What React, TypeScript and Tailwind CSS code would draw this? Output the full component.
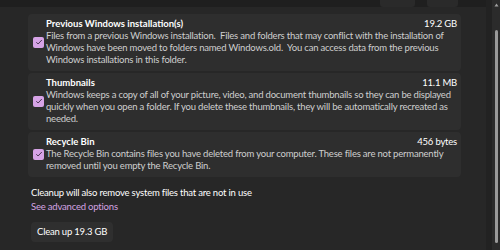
import React from "react";

const Check = () => (
  <div className="w-[11px] h-[11px] rounded-[2px] bg-[#d6a3e6] flex items-center justify-center shrink-0">
    <svg width="8" height="8" viewBox="0 0 8 8">
      <path d="M1.3 4.2 L3.1 6 L6.8 2" fill="none" stroke="#3b2a44" strokeWidth="0.9" />
    </svg>
  </div>
);

type CardProps = { title: string; size: string; lines: string[] };

const Card = ({ title, size, lines }: CardProps) => (
  <div className="flex items-center bg-[#2e2e2e] rounded-[4px] pl-[5px] pr-[4px] pt-[4px] pb-[5px]">
    <Check />
    <div className="flex-1 ml-[2px]">
      <div className="flex justify-between items-center h-[12px]">
        <span className="font-bold text-white">{title}</span>
        <span className="text-white tracking-[-0.2px]">{size}</span>
      </div>
      {lines.map((l, i) => (
        <div key={i} className="leading-[12px] text-[#cfcfcf] whitespace-pre tracking-[-0.2px]">
          {l}
        </div>
      ))}
    </div>
  </div>
);

export default function App() {
  return (
    <div
      className="w-[500px] h-[250px] bg-[#272727] flex overflow-hidden text-[9.5px]"
      style={{ fontFamily: 'Lato, "Noto Sans", sans-serif' }}
    >
      <div className="flex-1 flex flex-col">
        <div className="h-[7px] bg-[#1f1f1f] flex justify-end gap-[12px] pr-[28px]">
          <div className="w-[35px] h-[7px] bg-[#2a2a2a] rounded-b-[3px]" />
          <div className="w-[31px] h-[7px] bg-[#2a2a2a] rounded-b-[3px]" />
        </div>
        <div className="pl-[28px] pr-[25px] pt-[7px] flex flex-col gap-[2px]">
          <Card
            title="Previous Windows installation(s)"
            size="19.2 GB"
            lines={[
              "Files from a previous Windows installation.  Files and folders that may conflict with the installation of",
              "Windows have been moved to folders named Windows.old.  You can access data from the previous",
              "Windows installations in this folder.",
            ]}
          />
          <Card
            title="Thumbnails"
            size="11.1 MB"
            lines={[
              "Windows keeps a copy of all of your picture, video, and document thumbnails so they can be displayed",
              "quickly when you open a folder. If you delete these thumbnails, they will be automatically recreated as",
              "needed.",
            ]}
          />
          <Card
            title="Recycle Bin"
            size="456 bytes"
            lines={[
              "The Recycle Bin contains files you have deleted from your computer. These files are not permanently",
              "removed until you empty the Recycle Bin.",
            ]}
          />
        </div>
        <div className="pl-[31px] mt-[10px] tracking-[-0.2px]">
          <div className="leading-[12px] text-white">Cleanup will also remove system files that are not in use</div>
          <div className="leading-[13px] text-[#d4a3e2] mt-[1px]">See advanced options</div>
          <button className="mt-[9px] h-[20px] px-[6px] rounded-[4px] bg-[#2f2f2f] text-white leading-[20px]">
            Clean up 19.3 GB
          </button>
        </div>
      </div>
      <div className="w-[14px] flex">
        <div className="w-[6px] bg-[#222222]" />
        <div className="w-[8px] bg-[#2b2b2b] flex flex-col items-center pt-[3px]">
          <svg width="5" height="4" viewBox="0 0 5 4">
            <path d="M2.5 0.5 L4.5 3.5 L0.5 3.5 Z" fill="#a0a0a0" />
          </svg>
          <div className="w-[3px] mt-[23px] h-[213px] bg-[#9a9a9a] rounded-full" />
        </div>
      </div>
    </div>
  );
}
